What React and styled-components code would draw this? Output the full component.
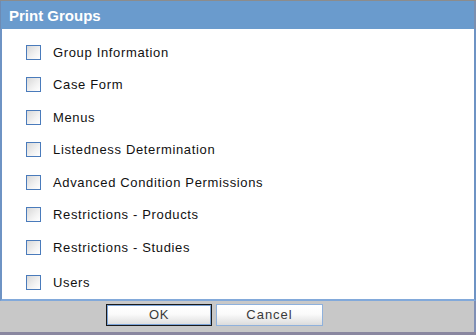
import React from "react";
import styled, { createGlobalStyle } from "styled-components";

const GlobalStyle = createGlobalStyle`
  html, body {
    margin: 0;
    padding: 0;
    background: #ffffff;
  }
  body {
    font-family: "Liberation Sans", Arial, sans-serif;
  }
`;

const groups = [
  "Group Information",
  "Case Form",
  "Menus",
  "Listedness Determination",
  "Advanced Condition Permissions",
  "Restrictions - Products",
  "Restrictions - Studies",
  "Users",
];

export default function App() {
  return (
    <>
      <GlobalStyle />
      <Dialog>
        <TitleBar>Print Groups</TitleBar>
        <Body>
          <List>
            {groups.map((name, i) => (
              <Row key={name} $last={i === groups.length - 1}>
                <Box />
                <Label>{name}</Label>
              </Row>
            ))}
          </List>
        </Body>
        <Footer>
          <Button $focused>OK</Button>
          <Button $spaced>Cancel</Button>
        </Footer>
      </Dialog>
    </>
  );
}

const Dialog = styled.div`
  width: 476px;
  height: 335px;
  box-sizing: border-box;
  display: flex;
  flex-direction: column;
  border-top: 1px solid #8c8c8c;
  border-bottom: 3px solid #8a87a0;
  background: #c8c8c8;
`;

const TitleBar = styled.div`
  height: 28px;
  display: flex;
  align-items: center;
  padding-left: 8px;
  background: #6a9bcd;
  border-left: 1px solid #6d8bb4;
  border-right: 2px solid #7a8fb0;
  color: #ffffff;
  font-weight: bold;
  font-size: 15px;
`;

const Body = styled.div`
  flex: 1;
  background: #ffffff;
  border-left: 2px solid #6e93c4;
  border-right: 2px solid #6e93c4;
  border-bottom: 2px solid #82a9da;
  padding: 7px 0 0 24px;
`;

const List = styled.div`
  display: flex;
  flex-direction: column;
`;

const Row = styled.div`
  height: 32.5px;
  margin-top: ${(p) => (p.$last ? "2.5px" : "0")};
  display: flex;
  align-items: center;
  gap: 12px;
`;

const Box = styled.span`
  width: 15px;
  height: 15px;
  box-sizing: border-box;
  border: 1px solid #4a7bbb;
  background: linear-gradient(135deg, #d8d8d8 0%, #f2f2f2 60%, #ffffff 100%);
`;

const Label = styled.span`
  font-size: 13px;
  letter-spacing: 0.65px;
  color: #111111;
`;

const Footer = styled.div`
  flex: 1;
  display: flex;
  align-items: flex-start;
  gap: 4px;
  padding: 3px 0 0 106px;
  border-right: 2px solid #7f8fb5;
`;

const Button = styled.button`
  height: 22px;
  width: ${(p) => (p.$focused ? "106px" : "107px")};
  box-sizing: border-box;
  padding: 0;
  border: 1px solid ${(p) => (p.$focused ? "#1a1a1a" : "#8fb1dc")};
  box-shadow: ${(p) => (p.$focused ? "inset 0 0 0 1px #7ea5d8" : "none")};
  background: linear-gradient(#ffffff 0%, #fbfbfb 45%, #dcdcdc 100%);
  font-family: "Liberation Sans", Arial, sans-serif;
  font-size: 13px;
  letter-spacing: ${(p) => (p.$spaced ? "1px" : "0.5px")};
  color: #3a3a3a;
`;
